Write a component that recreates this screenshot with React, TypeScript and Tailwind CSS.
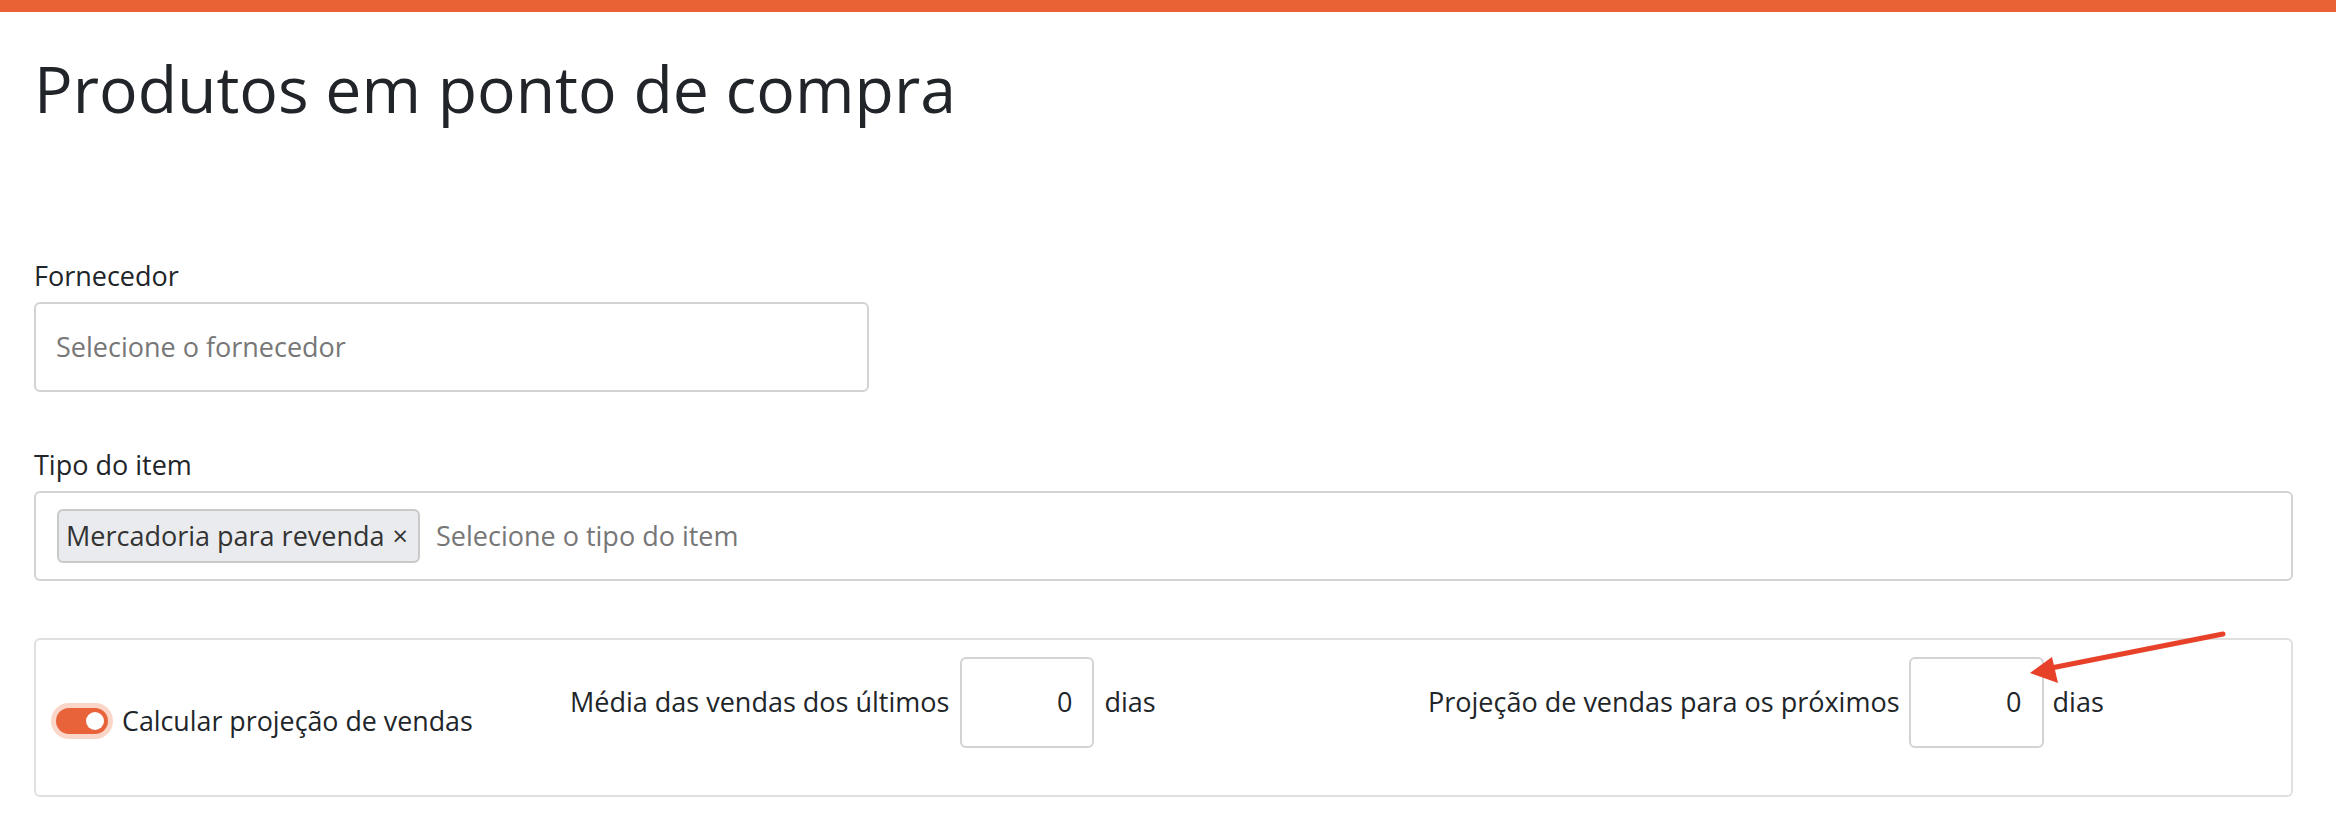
export default function App() {
  return (
    <div className="relative min-h-[826px] bg-white font-['Open_Sans',sans-serif] text-[#212529]">
      <div className="h-[12px] bg-[#e96235]" />
      <div className="px-[34px] pr-[43px]">
        <h1 className="mt-[38px] text-[64.3px] leading-[77px] font-normal">Produtos em ponto de compra</h1>

        <div className="mt-[129px] w-[835px]">
          <label className="block text-[27px] leading-[40px]">Fornecedor</label>
          <div className="mt-[6px] flex h-[90px] items-center rounded-[6px] border-2 border-[#d3d3d3] px-[20px] text-[27px] text-[#777]">
            Selecione o fornecedor
          </div>
        </div>

        <div className="mt-[53px]">
          <label className="block text-[27px] leading-[40px]">Tipo do item</label>
          <div className="mt-[6px] flex h-[90px] items-center gap-[16px] rounded-[6px] border-2 border-[#d3d3d3] px-[21px] text-[27px]">
            <span className="flex h-[54px] items-center rounded-[6px] border-2 border-[#c9c9c9] bg-[#e9ebee] pl-[7px] pr-[10px] text-[#333]">
              Mercadoria para revenda <span className="ml-[8px]">×</span>
            </span>
            <span className="text-[#777]">Selecione o tipo do item</span>
          </div>
        </div>

        <div className="mt-[57px] flex items-start rounded-[6px] border-2 border-[#e0e0e0] pt-[17px] pb-[47px] pl-[20px] text-[27px]">
          <div className="mt-[44px] flex w-[514px] items-center gap-[14px] leading-[40px]">
            <span className="relative flex h-[26px] w-[52px] items-center justify-end rounded-full bg-[#e8623a] pr-[4px] shadow-[0_0_0_5px_#fad6c8]">
              <span className="h-[18px] w-[18px] rounded-full bg-white" />
            </span>
            <span className="text-[26.8px]">Calcular projeção de vendas</span>
          </div>
          <div className="flex w-[858px] items-center">
            <span>Média das vendas dos últimos</span>
            <div className="ml-[11px] flex h-[91px] w-[134px] items-center justify-end rounded-[6px] border-2 border-[#d3d3d3] pr-[20px]">0</div>
            <span className="ml-[10px]">dias</span>
          </div>
          <div className="flex items-center">
            <span>Projeção de vendas para os próximos</span>
            <div className="ml-[9px] flex h-[91px] w-[135px] items-center justify-end rounded-[6px] border-2 border-[#d3d3d3] pr-[20px]">0</div>
            <span className="ml-[9px]">dias</span>
          </div>
        </div>
      </div>

      <svg className="pointer-events-none absolute left-0 top-0" width="2336" height="826">
        <line x1="2223" y1="634" x2="2046" y2="669" stroke="#e8412a" strokeWidth="5" strokeLinecap="round" />
        <polygon points="2030,673 2052,657 2058,683" fill="#e8412a" />
      </svg>
    </div>
  );
}
